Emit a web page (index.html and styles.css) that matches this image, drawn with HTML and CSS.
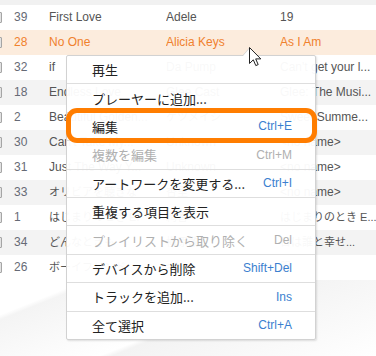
FILE: index.html
```html
<!DOCTYPE html>
<html>
<head>
    <title>Track list</title>
    <link rel="stylesheet" href="styles.css">
</head>
<body>
    <div class="page">
        <div class="top-strip"></div>

        <div class="tracks">
            <div class="row">
                <div class="check"></div>
                <div class="num">39</div>
                <div class="title">First Love</div>
                <div class="artist">Adele</div>
                <div class="album">19</div>
            </div>
            <div class="row current">
                <div class="check"></div>
                <div class="num">28</div>
                <div class="title">No One</div>
                <div class="artist">Alicia Keys</div>
                <div class="album">As I Am</div>
            </div>
            <div class="row">
                <div class="check"></div>
                <div class="num">32</div>
                <div class="title">if</div>
                <div class="artist">Da Pump</div>
                <div class="album">Can't get your l...</div>
            </div>
            <div class="row odd">
                <div class="check"></div>
                <div class="num">18</div>
                <div class="title">Endless Love</div>
                <div class="artist">Glee Cast</div>
                <div class="album">Glee: The Musi...</div>
            </div>
            <div class="row">
                <div class="check"></div>
                <div class="num">2</div>
                <div class="title">Beautiful Golden...</div>
                <div class="artist jp">ケツメイシ</div>
                <div class="album">Sweet Summe...</div>
            </div>
            <div class="row odd">
                <div class="check"></div>
                <div class="num">30</div>
                <div class="title">Can't Take My...</div>
                <div class="artist">Unknown</div>
                <div class="album">&lt;no name&gt;</div>
            </div>
            <div class="row">
                <div class="check"></div>
                <div class="num">31</div>
                <div class="title">Just The Way Y...</div>
                <div class="artist">Unknown</div>
                <div class="album">&lt;no name&gt;</div>
            </div>
            <div class="row odd">
                <div class="check"></div>
                <div class="num">33</div>
                <div class="title jp">オリビアを聴きな</div>
                <div class="artist jp">杏里</div>
                <div class="album">&lt;no name&gt;</div>
            </div>
            <div class="row">
                <div class="check"></div>
                <div class="num">1</div>
                <div class="title jp">はじまりのとき Ef</div>
                <div class="artist jp">絢香</div>
                <div class="album jp">はじまりのとき E...</div>
            </div>
            <div class="row odd">
                <div class="check"></div>
                <div class="num">34</div>
                <div class="title jp">どんなときも</div>
                <div class="artist jp">槇原敬之</div>
                <div class="album jp">日は誰と幸せ...</div>
            </div>
            <div class="row">
                <div class="check"></div>
                <div class="num">26</div>
                <div class="title jp">ボーイフレンド</div>
                <div class="artist">aiko</div>
                <div class="album jp">服</div>
            </div>
        </div>

        <!-- context menu -->
        <div class="menu">
            <div class="menu-arrow"></div>
            <div class="item"><span class="label">再生</span></div>
            <div class="item"><span class="label">プレーヤーに追加...</span></div>
            <div class="item marked"><span class="label">編集</span><span class="key">Ctrl+E</span></div>
            <div class="item disabled"><span class="label">複数を編集</span><span class="key">Ctrl+M</span></div>
            <div class="item"><span class="label">アートワークを変更する...</span><span class="key">Ctrl+I</span></div>
            <div class="item"><span class="label">重複する項目を表示</span></div>
            <div class="item disabled"><span class="label">プレイリストから取り除く</span><span class="key">Del</span></div>
            <div class="item"><span class="label">デバイスから削除</span><span class="key">Shift+Del</span></div>
            <div class="item"><span class="label">トラックを追加...</span><span class="key">Ins</span></div>
            <div class="item"><span class="label">全て選択</span><span class="key">Ctrl+A</span></div>
        </div>

        <svg class="cursor" width="13" height="20" viewBox="0 0 13 20">
            <path d="M0.5 0.5 L0.5 16.5 L4.3 12.8 L6.8 18.6 L9.2 17.6 L6.7 11.9 L11.8 11.9 Z" fill="#fff" stroke="#222" stroke-width="1" stroke-linejoin="round"/>
        </svg>
    </div>
</body>
</html>
```

FILE: styles.css
```css
body {
    margin: 0;
    font-family: "Liberation Sans", Arial, "Noto Sans CJK JP", sans-serif;
    font-size: 12px;
    overflow: hidden;
}

.page {
    position: relative;
    width: 376px;
    height: 356px;
    background: linear-gradient(158deg, #ffffff 0%, #ffffff 62%, #f4f4f4 63%, #ffffff 78%, #f3f3f3 79%, #ffffff 100%);
}

.top-strip {
    height: 5px;
    background: #f1f1f1;
}

.row {
    display: flex;
    align-items: center;
    height: 25px;
    line-height: 25px;
    color: #555;
    background: #fff;
}

    .row.odd {
        background: #f3f3f3;
    }

    .row.current {
        background: #fcecdd;
        color: #f0812d;
    }

.jp {
    font-size: 11px;
}

.check {
    width: 7px;
    height: 9px;
    margin-left: -7px;
    margin-right: 12px;
    border: 1px solid #a5a5a5;
    border-radius: 1px;
    background: #e2e2e2;
}

.num {
    width: 35px;
    color: #666a75;
}

.row.current .num {
    color: #f0812d;
}

.title {
    width: 117px;
    white-space: nowrap;
    overflow: hidden;
}

.artist {
    width: 114px;
    white-space: nowrap;
    overflow: hidden;
}

.album {
    flex: 1;
    white-space: nowrap;
    overflow: hidden;
}

.menu {
    position: absolute;
    left: 66px;
    top: 55px;
    width: 248px;
    background: rgba(255, 255, 255, 0.96);
    border: 1px solid #d2d2d2;
    border-radius: 2px;
    box-shadow: 1px 1px 2px rgba(0, 0, 0, 0.12);
}

.menu-arrow {
    position: absolute;
    left: 175px;
    top: -8px;
    width: 0;
    height: 0;
    border-left: 7px solid transparent;
    border-right: 7px solid transparent;
    border-bottom: 8px solid #d2d2d2;
}

    .menu-arrow::after {
        content: "";
        position: absolute;
        left: -6px;
        top: 1px;
        border-left: 6px solid transparent;
        border-right: 6px solid transparent;
        border-bottom: 7px solid #fff;
    }

.item {
    position: relative;
    display: flex;
    justify-content: space-between;
    align-items: center;
    height: 27.4px;
    padding: 0 23px 0 25px;
    border-bottom: 1px solid #dedede;
}

    .item:last-child {
        border-bottom: none;
    }

.label {
    font-family: "Noto Sans CJK JP", sans-serif;
    font-size: 13px;
    color: #222;
}

.key {
    font-family: "Liberation Sans", Arial, sans-serif;
    font-size: 12px;
    color: #3b7fcf;
}

.item.disabled .label,
.item.disabled .key {
    color: #b0b0b0;
}

/* orange highlight around the edit item */
.item.marked::after {
    content: "";
    position: absolute;
    left: -1px;
    right: -2px;
    top: -5px;
    bottom: -3px;
    border: 5px solid #ff7d00;
    border-radius: 11px;
}

.cursor {
    position: absolute;
    left: 249px;
    top: 47px;
}
```
